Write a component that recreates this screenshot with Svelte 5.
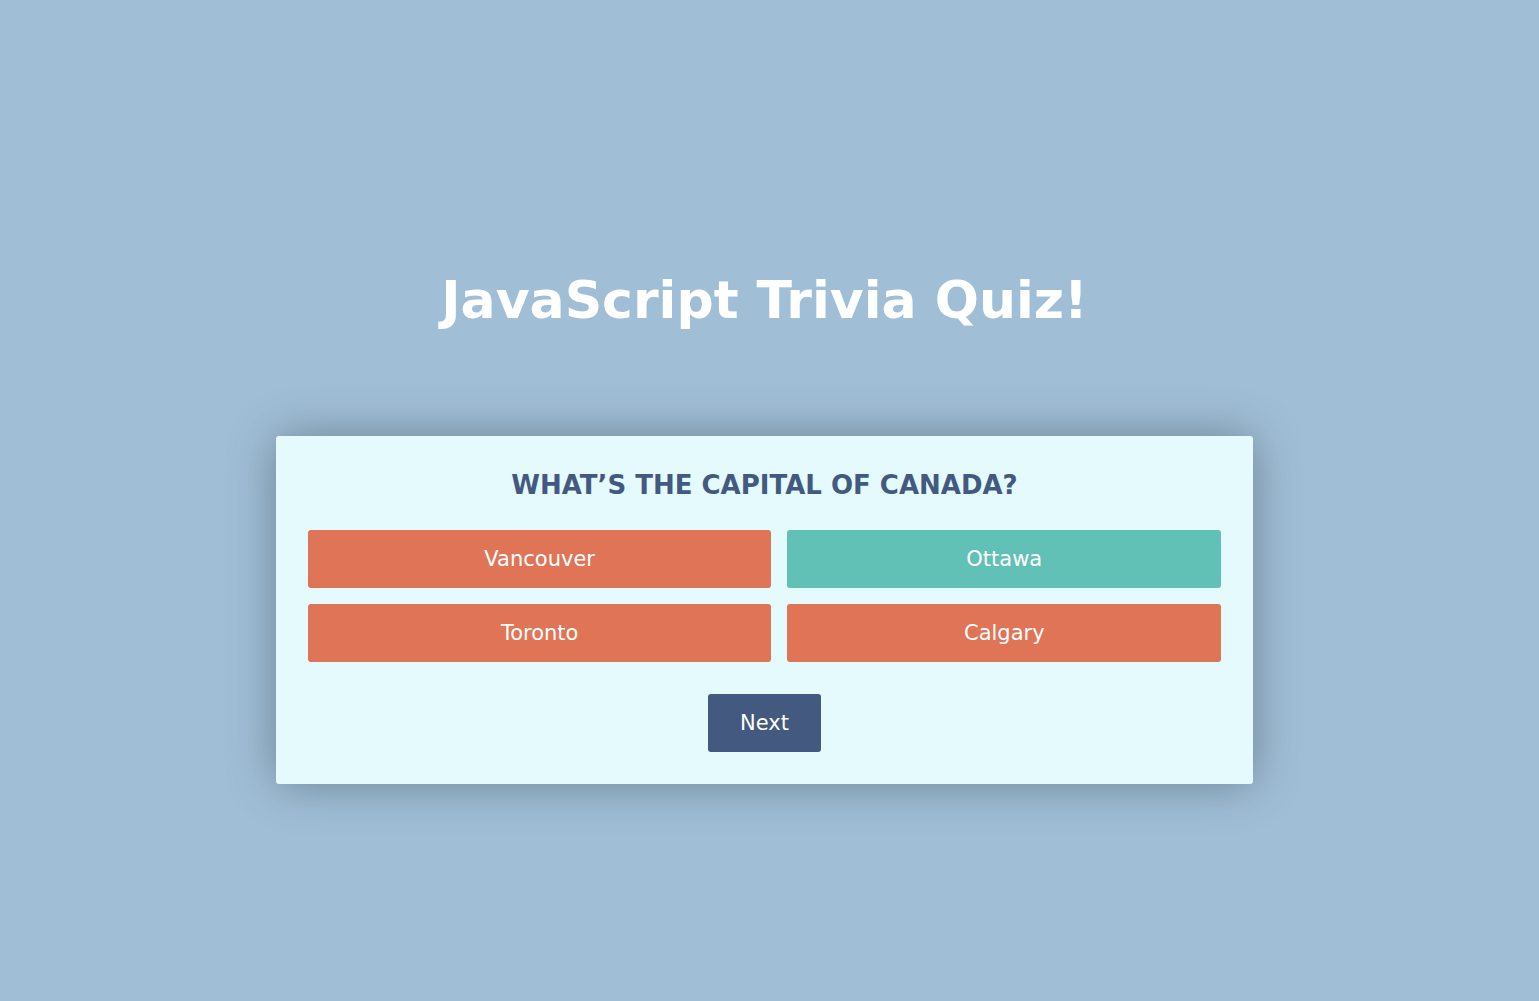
<script>
  const question = 'What’s the capital of Canada?';
  const answers = [
    { text: 'Vancouver', correct: false },
    { text: 'Ottawa', correct: true },
    { text: 'Toronto', correct: false },
    { text: 'Calgary', correct: false }
  ];
</script>

<main>
  <h1>JavaScript Trivia Quiz!</h1>
  <section class="card">
    <h2>{question}</h2>
    <div class="answers">
      {#each answers as answer}
        <button type="button" class="btn" class:correct={answer.correct}>{answer.text}</button>
      {/each}
    </div>
    <button type="button" class="btn next">Next</button>
  </section>
</main>

<style>
  :global(body) {
    background: #a0bfd7;
  }
  main {
    box-sizing: border-box;
    min-height: 100vh;
    padding: 0 11px 0 1px;
    display: flex;
    flex-direction: column;
    align-items: center;
    justify-content: center;
    font-family: Verdana, "DejaVu Sans", sans-serif;
  }
  h1 {
    margin: 0 0 104px;
    padding-top: 50px;
    font-size: 52px;
    line-height: 64px;
    color: #fff;
    text-align: center;
  }
  .card {
    box-sizing: border-box;
    width: 64%;
    padding: 32px;
    display: flex;
    flex-direction: column;
    align-items: center;
    background: #e4fafc;
    border-radius: 3px;
    box-shadow: 0 0 50px rgba(0, 0, 0, 0.32);
  }
  h2 {
    margin: 0 0 28px;
    font-size: 26px;
    line-height: 34px;
    color: #43597f;
    text-align: center;
    text-transform: uppercase;
  }
  .answers {
    align-self: stretch;
    display: grid;
    grid-template-columns: 464fr 434fr;
    gap: 16px;
    margin-bottom: 32px;
  }
  .btn {
    padding: 16px 32px;
    border: 0;
    border-radius: 3px;
    background: #df7456;
    color: #fff;
    font-family: inherit;
    font-size: 21px;
    line-height: 26px;
    cursor: pointer;
  }
  .correct {
    background: #61c1b6;
  }
  .next {
    background: #43597f;
  }
</style>
